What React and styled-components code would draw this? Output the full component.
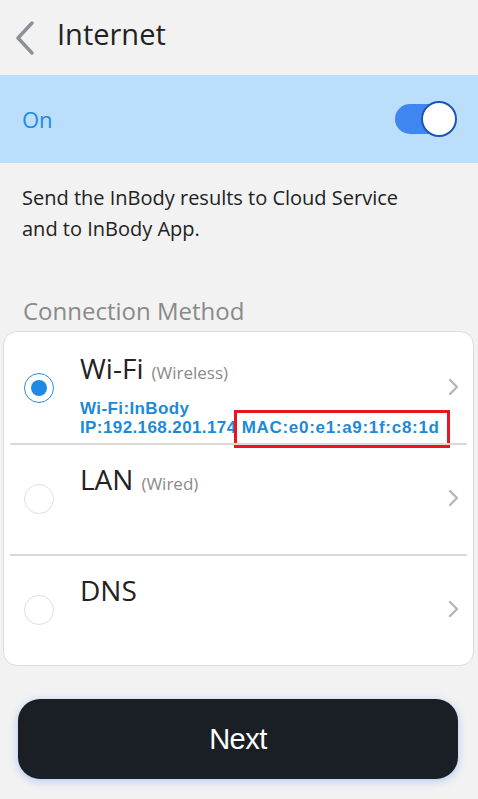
import styled, { createGlobalStyle } from 'styled-components';

const GlobalStyle = createGlobalStyle`
    html, body {
        margin: 0;
        padding: 0;
        background: #f2f2f2;
    }

    body {
        font-family: "Open Sans", "Noto Sans", sans-serif;
        color: #222;
    }
`;

const methods = [
    { id: 'wifi', name: 'Wi-Fi', note: '(Wireless)', selected: true },
    { id: 'lan', name: 'LAN', note: '(Wired)' },
    { id: 'dns', name: 'DNS' },
];

function BackIcon() {
    return (
        <svg width="20" height="34" viewBox="0 0 20 34" fill="none">
            <path d="M17 2 L3 17 L17 32" stroke="#8b9199" strokeWidth="3.4" strokeLinecap="round" strokeLinejoin="round" />
        </svg>
    );
}

function ChevronIcon() {
    return (
        <svg width="12" height="18" viewBox="0 0 12 18" fill="none">
            <path d="M3 2 L10 9 L3 16" stroke="#b3b7bd" strokeWidth="2.4" strokeLinecap="round" strokeLinejoin="round" />
        </svg>
    );
}

function App() {
    return (
        <>
            <GlobalStyle />
            <SPage>
                <SHeader>
                    <BackIcon />
                    <STitle>Internet</STitle>
                </SHeader>

                <SStatusBar>
                    <SStatus>On</SStatus>
                    <SToggle aria-label="toggle internet">
                        <span className="track" />
                        <span className="knob" />
                    </SToggle>
                </SStatusBar>

                <SDescription>
                    Send the InBody results to Cloud Service<br />
                    and to InBody App.
                </SDescription>

                <SSectionLabel>Connection Method</SSectionLabel>

                <SCard>
                    {methods.map((method) => (
                        <SRow key={method.id}>
                            <SRadio $checked={method.selected} />
                            <SRowBody>
                                <SMethodName>
                                    {method.name}
                                    {method.note && <SNote>{method.note}</SNote>}
                                </SMethodName>
                                {method.selected && (
                                    <SInfo>
                                        Wi-Fi:InBody<br />
                                        IP:192.168.201.174 <SHighlight>MAC:e0:e1:a9:1f:c8:1d</SHighlight>
                                    </SInfo>
                                )}
                            </SRowBody>
                            <SChevron>
                                <ChevronIcon />
                            </SChevron>
                        </SRow>
                    ))}
                </SCard>

                <SNextButton>Next</SNextButton>
            </SPage>
        </>
    );
}

const SPage = styled.div`
    width: 478px;
    min-height: 100vh;
    display: flex;
    flex-direction: column;
    background: #f2f2f2;
`;

const SHeader = styled.header`
    height: 75px;
    display: flex;
    align-items: center;
    padding-left: 15px;
    gap: 22px;
    box-sizing: border-box;
`;

const STitle = styled.h1`
    margin: 0;
    font-size: 29px;
    font-weight: 400;
    color: #222;
    line-height: 1;
    padding-bottom: 8px;
`;

const SStatusBar = styled.div`
    height: 88px;
    background: #bbdefb;
    display: flex;
    align-items: center;
    justify-content: space-between;
    padding: 0 21px 0 22px;
`;

const SStatus = styled.span`
    font-size: 22px;
    color: #1e88e5;
`;

const SToggle = styled.button`
    position: relative;
    width: 62px;
    height: 36px;
    border: none;
    padding: 0;
    background: transparent;

    .track {
        position: absolute;
        left: 0;
        top: 3px;
        width: 56px;
        height: 30px;
        border-radius: 15px;
        background: #3f86f1;
    }

    .knob {
        position: absolute;
        right: 0;
        top: 0;
        width: 36px;
        height: 36px;
        box-sizing: border-box;
        border-radius: 50%;
        background: #fff;
        border: 2px solid #1e56b3;
    }
`;

const SDescription = styled.p`
    margin: 19px 22px 0;
    font-size: 20px;
    line-height: 31px;
    color: #222;
`;

const SSectionLabel = styled.h2`
    margin: 51px 23px 0;
    font-size: 24px;
    font-weight: 400;
    line-height: 32px;
    color: #8a8a8a;
`;

const SCard = styled.div`
    margin: 4px 4px 0 3px;
    background: #fff;
    border: 1px solid #dcdcdc;
    border-radius: 14px;
    overflow: hidden;
`;

const SRow = styled.div`
    position: relative;
    height: 111px;
    display: flex;
    align-items: center;
    padding: 0 14px 0 20px;
    box-sizing: border-box;

    & + &::before {
        content: '';
        position: absolute;
        top: 0;
        left: 6px;
        right: 6px;
        height: 2px;
        background: #d9d9d9;
    }
`;

const SRadio = styled.span`
    flex: none;
    width: 30px;
    height: 30px;
    box-sizing: border-box;
    border-radius: 50%;
    border: 1px solid ${({ $checked }) => ($checked ? '#2a8ce0' : '#dedede')};
    display: flex;
    align-items: center;
    justify-content: center;

    &::after {
        content: '';
        width: 16px;
        height: 16px;
        border-radius: 50%;
        background: #1e88e5;
        display: ${({ $checked }) => ($checked ? 'block' : 'none')};
    }
`;

const SRowBody = styled.div`
    flex: 1;
    align-self: flex-start;
    padding: 18px 0 0 26px;
`;

const SMethodName = styled.div`
    font-size: 28px;
    line-height: 36px;
    color: #222;
`;

const SNote = styled.span`
    margin-left: 8px;
    font-size: 17px;
    color: #8a8a8a;
`;

const SInfo = styled.div`
    margin-top: 8px;
    font-family: "Liberation Sans", Arial, sans-serif;
    font-weight: 700;
    font-size: 17px;
    line-height: 19px;
    letter-spacing: 0.4px;
    color: #1b8ad8;
    white-space: nowrap;
`;

const SHighlight = styled.span`
    position: relative;
    letter-spacing: 0.7px;

    &::after {
        content: '';
        position: absolute;
        top: -8px;
        bottom: -11px;
        left: -8px;
        right: -10px;
        border: 3px solid #e8161f;
    }
`;

const SChevron = styled.span`
    flex: none;
    display: flex;
    margin-bottom: 2px;
`;

const SNextButton = styled.button`
    margin: 33px 20px 0 18px;
    height: 80px;
    border: none;
    border-radius: 22px;
    background: #1a1f26;
    color: #fff;
    font-family: "Liberation Sans", Arial, sans-serif;
    font-size: 29px;
    letter-spacing: -0.5px;
    box-shadow: 0 2px 8px rgba(90, 150, 240, 0.45);
`;

export default App;
